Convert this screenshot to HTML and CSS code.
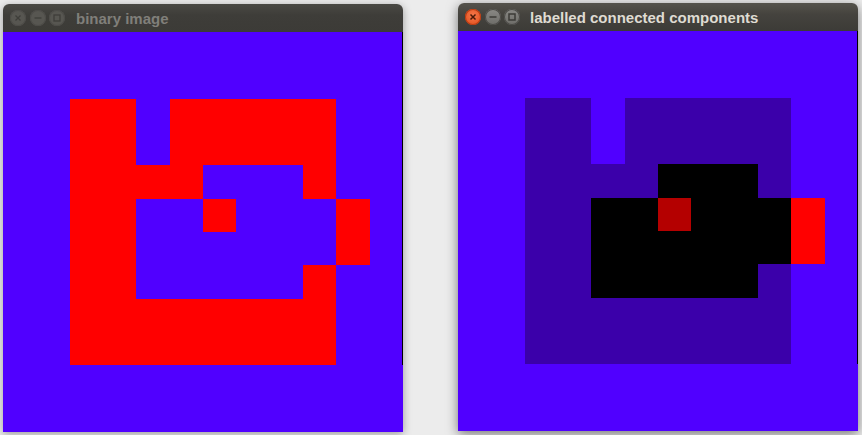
FILE: index.html
```html
<!DOCTYPE html>
<html>
<head>
<meta charset="utf-8">
<link rel="stylesheet" href="styles.css">
</head>
<body>
<div class="desk">
  <div class="win win-left inactive">
    <div class="titlebar">
      <div class="btns">
        <span class="btn close"><svg viewBox="0 0 16 16" width="16" height="16"><path d="M5.5 5.5L10.5 10.5M10.5 5.5L5.5 10.5"/></svg></span>
        <span class="btn"><svg viewBox="0 0 16 16" width="16" height="16"><path d="M4.5 8H11.5"/></svg></span>
        <span class="btn"><svg viewBox="0 0 16 16" width="16" height="16"><rect x="5" y="5" width="6" height="6"/></svg></span>
      </div>
      <span class="title">binary image</span>
    </div>
    <div class="content">
      <div class="grid">
        <i class="b"></i><i class="b"></i><i class="b"></i><i class="b"></i><i class="b"></i><i class="b"></i><i class="b"></i><i class="b"></i><i class="b"></i><i class="b"></i><i class="b"></i><i class="b"></i>
        <i class="b"></i><i class="b"></i><i class="b"></i><i class="b"></i><i class="b"></i><i class="b"></i><i class="b"></i><i class="b"></i><i class="b"></i><i class="b"></i><i class="b"></i><i class="b"></i>
        <i class="b"></i><i class="b"></i><i class="r"></i><i class="r"></i><i class="b"></i><i class="r"></i><i class="r"></i><i class="r"></i><i class="r"></i><i class="r"></i><i class="b"></i><i class="b"></i>
        <i class="b"></i><i class="b"></i><i class="r"></i><i class="r"></i><i class="b"></i><i class="r"></i><i class="r"></i><i class="r"></i><i class="r"></i><i class="r"></i><i class="b"></i><i class="b"></i>
        <i class="b"></i><i class="b"></i><i class="r"></i><i class="r"></i><i class="r"></i><i class="r"></i><i class="b"></i><i class="b"></i><i class="b"></i><i class="r"></i><i class="b"></i><i class="b"></i>
        <i class="b"></i><i class="b"></i><i class="r"></i><i class="r"></i><i class="b"></i><i class="b"></i><i class="r"></i><i class="b"></i><i class="b"></i><i class="b"></i><i class="r"></i><i class="b"></i>
        <i class="b"></i><i class="b"></i><i class="r"></i><i class="r"></i><i class="b"></i><i class="b"></i><i class="b"></i><i class="b"></i><i class="b"></i><i class="b"></i><i class="r"></i><i class="b"></i>
        <i class="b"></i><i class="b"></i><i class="r"></i><i class="r"></i><i class="b"></i><i class="b"></i><i class="b"></i><i class="b"></i><i class="b"></i><i class="r"></i><i class="b"></i><i class="b"></i>
        <i class="b"></i><i class="b"></i><i class="r"></i><i class="r"></i><i class="r"></i><i class="r"></i><i class="r"></i><i class="r"></i><i class="r"></i><i class="r"></i><i class="b"></i><i class="b"></i>
        <i class="b"></i><i class="b"></i><i class="r"></i><i class="r"></i><i class="r"></i><i class="r"></i><i class="r"></i><i class="r"></i><i class="r"></i><i class="r"></i><i class="b"></i><i class="b"></i>
        <i class="b"></i><i class="b"></i><i class="b"></i><i class="b"></i><i class="b"></i><i class="b"></i><i class="b"></i><i class="b"></i><i class="b"></i><i class="b"></i><i class="b"></i><i class="b"></i>
        <i class="b"></i><i class="b"></i><i class="b"></i><i class="b"></i><i class="b"></i><i class="b"></i><i class="b"></i><i class="b"></i><i class="b"></i><i class="b"></i><i class="b"></i><i class="b"></i>
      </div>
    </div>
  </div>
  <div class="win win-right active">
    <div class="titlebar">
      <div class="btns">
        <span class="btn close"><svg viewBox="0 0 16 16" width="16" height="16"><path d="M5.5 5.5L10.5 10.5M10.5 5.5L5.5 10.5"/></svg></span>
        <span class="btn"><svg viewBox="0 0 16 16" width="16" height="16"><path d="M4.5 8H11.5"/></svg></span>
        <span class="btn"><svg viewBox="0 0 16 16" width="16" height="16"><rect x="5" y="5" width="6" height="6"/></svg></span>
      </div>
      <span class="title">labelled connected components</span>
    </div>
    <div class="content">
      <div class="grid">
        <i class="b"></i><i class="b"></i><i class="b"></i><i class="b"></i><i class="b"></i><i class="b"></i><i class="b"></i><i class="b"></i><i class="b"></i><i class="b"></i><i class="b"></i><i class="b"></i>
        <i class="b"></i><i class="b"></i><i class="b"></i><i class="b"></i><i class="b"></i><i class="b"></i><i class="b"></i><i class="b"></i><i class="b"></i><i class="b"></i><i class="b"></i><i class="b"></i>
        <i class="b"></i><i class="b"></i><i class="d"></i><i class="d"></i><i class="b"></i><i class="d"></i><i class="d"></i><i class="d"></i><i class="d"></i><i class="d"></i><i class="b"></i><i class="b"></i>
        <i class="b"></i><i class="b"></i><i class="d"></i><i class="d"></i><i class="b"></i><i class="d"></i><i class="d"></i><i class="d"></i><i class="d"></i><i class="d"></i><i class="b"></i><i class="b"></i>
        <i class="b"></i><i class="b"></i><i class="d"></i><i class="d"></i><i class="d"></i><i class="d"></i><i class="k"></i><i class="k"></i><i class="k"></i><i class="d"></i><i class="b"></i><i class="b"></i>
        <i class="b"></i><i class="b"></i><i class="d"></i><i class="d"></i><i class="k"></i><i class="k"></i><i class="m"></i><i class="k"></i><i class="k"></i><i class="k"></i><i class="r"></i><i class="b"></i>
        <i class="b"></i><i class="b"></i><i class="d"></i><i class="d"></i><i class="k"></i><i class="k"></i><i class="k"></i><i class="k"></i><i class="k"></i><i class="k"></i><i class="r"></i><i class="b"></i>
        <i class="b"></i><i class="b"></i><i class="d"></i><i class="d"></i><i class="k"></i><i class="k"></i><i class="k"></i><i class="k"></i><i class="k"></i><i class="d"></i><i class="b"></i><i class="b"></i>
        <i class="b"></i><i class="b"></i><i class="d"></i><i class="d"></i><i class="d"></i><i class="d"></i><i class="d"></i><i class="d"></i><i class="d"></i><i class="d"></i><i class="b"></i><i class="b"></i>
        <i class="b"></i><i class="b"></i><i class="d"></i><i class="d"></i><i class="d"></i><i class="d"></i><i class="d"></i><i class="d"></i><i class="d"></i><i class="d"></i><i class="b"></i><i class="b"></i>
        <i class="b"></i><i class="b"></i><i class="b"></i><i class="b"></i><i class="b"></i><i class="b"></i><i class="b"></i><i class="b"></i><i class="b"></i><i class="b"></i><i class="b"></i><i class="b"></i>
        <i class="b"></i><i class="b"></i><i class="b"></i><i class="b"></i><i class="b"></i><i class="b"></i><i class="b"></i><i class="b"></i><i class="b"></i><i class="b"></i><i class="b"></i><i class="b"></i>
      </div>
    </div>
  </div>
</div>
</body>
</html>
```
FILE: styles.css
```css
html, body {
  margin: 0;
  padding: 0;
  width: 862px;
  height: 435px;
  overflow: hidden;
  background: #ececec;
  font-family: "Liberation Sans", "DejaVu Sans", sans-serif;
}
.desk {
  display: flex;
  align-items: flex-start;
  padding: 3px 0 0 3px;
  gap: 54px;
}
.win {
  width: 400px;
  display: flex;
  flex-direction: column;
  box-shadow: 0 2px 8px rgba(0,0,0,0.35);
  border-radius: 6px 6px 0 0;
}
.win-left {
  margin-top: 1px;
}
.win-right {
  margin-left: 1px;
  box-shadow: 0 3px 12px rgba(0,0,0,0.5);
}
.titlebar {
  height: 28px;
  display: flex;
  align-items: center;
  border-radius: 6px 6px 0 0;
  background: linear-gradient(#4a4944, #3e3d39 40%, #3c3b37);
  padding-left: 7px;
}
.active .titlebar {
  background: linear-gradient(#55534c, #45433e 40%, #3c3b37);
}
.btns {
  display: flex;
  gap: 3.5px;
}
.btn {
  width: 16px;
  height: 16px;
  border-radius: 50%;
  background: #5e5d59;
  display: block;
}
.btn svg {
  display: block;
  fill: none;
  stroke: #3c3b37;
  stroke-width: 1.3;
}
.inactive .btn {
  background: #575651;
  box-shadow: inset 0 0 0 1px #4d4c48;
}
.inactive .btn svg {
  stroke: #3f3e3a;
}
.active .btn {
  background: linear-gradient(#8a8985, #6d6c68);
  box-shadow: inset 0 0 0 1px #4b4a46;
}
.active .btn svg {
  stroke: #3c3b37;
  stroke-width: 1.5;
}
.active .btn.close {
  background: radial-gradient(circle at 50% 40%, #f7784a, #df4a17);
  box-shadow: inset 0 0 0 1px #b83b12;
}
.active .btn.close svg {
  stroke: #4b1a08;
}
.title {
  font-size: 15px;
  font-weight: bold;
  margin-left: 11px;
  padding-top: 1px;
}
.inactive .title {
  color: #807f7a;
}
.active .title {
  color: #dfdbd2;
  margin-left: 10px;
}
.content {
  position: relative;
  width: 400px;
  height: 400px;
}
.content::after {
  content: "";
  position: absolute;
  right: 0;
  top: 0;
  width: 1px;
  height: 333px;
  background: #000;
}
.grid {
  display: grid;
  grid-template-columns: repeat(12, 1fr);
  grid-template-rows: repeat(12, 1fr);
  width: 400px;
  height: 400px;
}
.grid i {
  display: block;
}
.b { background: #5000ff; }
.r { background: #ff0000; }
.d { background: #3b00aa; }
.k { background: #000000; }
.m { background: #b40000; }
```
